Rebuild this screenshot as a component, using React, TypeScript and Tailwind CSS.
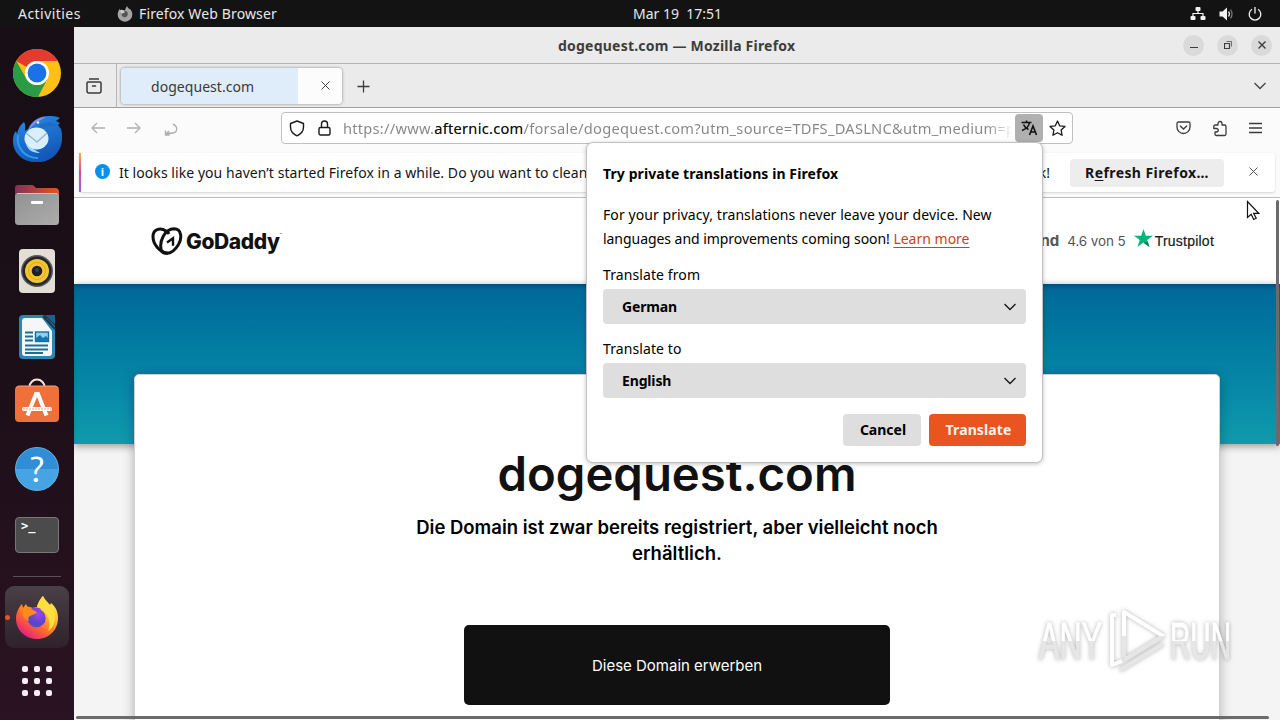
import type { ReactNode } from "react";

function ChromeIcon() {
  return (
    <svg width="48" height="48" viewBox="0 0 48 48">
      <circle cx="24" cy="24" r="24" fill="#fcc016" />
      <path d="M3.2 12A24 24 0 0 1 44.8 12H24A12 12 0 0 0 13.6 18Z" fill="#e33b2e" />
      <path d="M3.2 12A24 24 0 0 0 25 48L34.4 30A12 12 0 0 1 13.6 30Z" fill="#2a9b47" />
      <circle cx="24" cy="24" r="12" fill="#fff" />
      <circle cx="24" cy="24" r="9.4" fill="#1b72e8" />
    </svg>
  );
}

function ThunderbirdIcon() {
  return (
    <svg width="50" height="48" viewBox="0 0 50 48">
      <defs>
        <linearGradient id="tb" x1="0" y1="0" x2="0.4" y2="1">
          <stop offset="0" stopColor="#2a8de8" />
          <stop offset="1" stopColor="#1258b8" />
        </linearGradient>
      </defs>
      <path d="M16 14C20 5 28 1 36 1c4 0 8 0 12 2l-4 3 4 2-2 2 3 4c5 17-6 33-23 33C11 48 1 38 1 26c0-5 1-8 3-10l1 3c1-5 3-9 7-12 2 3 1 6 1 9z" fill="url(#tb)" />
      <path d="M17 14C20 6 27 2 34 2l-5 3c-5 2-9 6-12 10z" fill="#8e8de8" />
      <path d="M26 11c8-6 17-3 20 1-5-2-10-2-14 2z" fill="#2369c6" />
      <circle cx="26" cy="7.500" r="1.200" fill="#dff" />
      <path d="M6 20C4 33 13 43 26 43" fill="none" stroke="#2f9cf0" strokeWidth="2" />
      <ellipse cx="24.500" cy="23.500" rx="12" ry="11" fill="#d9f0fb" />
      <path d="M14 18l11 9 10-9" fill="none" stroke="#9db7cc" strokeWidth="1.500" />
      <path d="M14 29c4 4 8 5 14 9-6 0-12-2-14-9z" fill="#9edaf7" />
    </svg>
  );
}

function FilesIcon() {
  return (
    <svg width="46" height="42" viewBox="0 0 46 42">
      <defs>
        <linearGradient id="fl" x1="0" x2="1">
          <stop offset="0" stopColor="#803259" />
          <stop offset="1" stopColor="#e95420" />
        </linearGradient>
        <linearGradient id="flf" x1="0" y1="0" x2="1" y2="1">
          <stop offset="0" stopColor="#919191" />
          <stop offset="1" stopColor="#adadad" />
        </linearGradient>
      </defs>
      <path d="M1 4Q1 1 4 1h14q1 0 2 1l2 2h19q4 0 4 4v10H1z" fill="url(#fl)" />
      <rect x="1" y="9" width="44" height="32" rx="3.500" fill="url(#flf)" />
      <path d="M3 9.500h40" stroke="#c6c6c6" />
      <rect x="17" y="17" width="12" height="3" rx="1" fill="#fff" />
    </svg>
  );
}

function RhythmboxIcon() {
  return (
    <svg width="38" height="46" viewBox="0 0 38 46">
      <rect x="1" y="1" width="36" height="44" rx="4" fill="#e4dfd6" />
      <circle cx="19" cy="23" r="16" fill="#55585c" />
      <circle cx="19" cy="23" r="14.500" fill="#24262b" />
      <circle cx="19" cy="23" r="12" fill="#f4c532" />
      <circle cx="19" cy="23" r="8.500" fill="none" stroke="#e0a91f" strokeWidth="1" />
      <circle cx="19" cy="23" r="5.300" fill="#1c2026" />
      <circle cx="19" cy="22" r="2" fill="#3b4048" />
    </svg>
  );
}

function WriterIcon() {
  return (
    <svg width="38" height="46" viewBox="0 0 38 46">
      <path d="M1 5q0-4 4-4h21l11 11v29q0 4-4 4H5q-4 0-4-4z" fill="#2b86b3" />
      <path d="M27 1h10v10z" fill="#1b6288" />
      <path d="M4 7q0-3 3-3h17l10 13v22q0 3-3 3H7q-3 0-3-3z" fill="#f6f6f6" />
      <path d="M25 2l12 13" stroke="#17364d" strokeWidth="2" />
      <path d="M7 18.500h8M7 22.500h8M7 26.500h8M7 31.500h23M7 35.500h23M7 39h18" stroke="#1d6d99" strokeWidth="1.800" />
      <rect x="17.500" y="18" width="13" height="9.500" fill="#8ed1f0" stroke="#1d6d99" strokeWidth="1.400" />
      <path d="M18 27v-3l4-3 3 3 3-2 2 2v3z" fill="#1475b0" />
    </svg>
  );
}

function SoftwareIcon() {
  return (
    <svg className="mb-[5px]" width="46" height="46" viewBox="0 0 46 46">
      <path d="M15.500 11V9a7.500 7.500 0 0 1 15 0v2" fill="none" stroke="#f9e3da" strokeWidth="2" />
      <rect x="1" y="8" width="44" height="36" rx="4" fill="#f0703a" />
      <path d="M2 10q1-2 3-2h36q2 0 3 2" fill="none" stroke="#f5a07c" />
      <path d="M13.500 37.500L22 16h2l8.500 21.500" fill="none" stroke="#fff" strokeWidth="4" />
      <path d="M10 31h26" stroke="#fff" strokeWidth="4" strokeLinecap="round" />
      <path d="M9 31h28" stroke="#f0a078" strokeWidth="1" strokeDasharray="2 1" />
    </svg>
  );
}

function HelpIcon() {
  return (
    <div className="flex h-[44px] w-[44px] items-center justify-center rounded-full border border-[#62b3e6] bg-linear-to-b from-[#2f8ed6] from-50% to-[#46a3e4] to-50% font-['Ubuntu','Noto_Sans',sans-serif] text-[36px] leading-none text-white">
      ?
    </div>
  );
}

function TerminalIcon() {
  return (
    <div className="h-[36px] w-[44px] rounded-[4px] border border-[#777] bg-[#4b4b4b] pl-[5px] pt-[2px] font-['DejaVu_Sans_Mono',monospace] text-[12px] font-bold leading-[13px] text-white">
      &gt;_
    </div>
  );
}

function FirefoxIcon() {
  return (
    <svg width="44" height="46" viewBox="0 0 44 46">
      <defs>
        <linearGradient id="ff" x1="0.85" y1="0.1" x2="0.25" y2="0.95">
          <stop offset="0" stopColor="#fff14d" />
          <stop offset="0.35" stopColor="#ffb22e" />
          <stop offset="0.65" stopColor="#ff6a2a" />
          <stop offset="1" stopColor="#e8207e" />
        </linearGradient>
        <radialGradient id="ffc" cx="0.6" cy="0.3">
          <stop offset="0" stopColor="#a145e8" />
          <stop offset="1" stopColor="#5946c8" />
        </radialGradient>
      </defs>
      <path d="M22 13c2-4 3-8 6-11 2 4 5 6 7 9l1-2c5 4 7 9 7 15 0 12-9 21-21 21S1 36 1 24C1 19 4 13 7 10l1 4 3-4c1 3 3 4 6 4z" fill="url(#ff)" />
      <path d="M22 12c2-5 3-7 6-10 1 6 8 8 11 15 3 9-1 17-6 20 3-7 1-14-3-18-3-3-7-3-8-7z" fill="#ffdf3c" />
      <circle cx="21.500" cy="24" r="9.200" fill="url(#ffc)" />
      <path d="M8 14c4-2 10-2 14 5l-7 3c-2 1-2 3-1 5-6-2-8-7-6-13z" fill="#ff8a1d" />
      <path d="M16 15c3-2 8-2 11 1-3-1-4 0-5 2z" fill="#9040d8" />
    </svg>
  );
}

function DockItem({ children }: { children: ReactNode }) {
  return <div className="flex h-[66px] shrink-0 items-center justify-center">{children}</div>;
}

function Dock() {
  return (
    <aside className="flex w-[74px] shrink-0 flex-col bg-linear-to-b from-[#180e15] via-[#1c0f18] to-[#2b1322] pt-[13px]">
      <DockItem><ChromeIcon /></DockItem>
      <DockItem><ThunderbirdIcon /></DockItem>
      <DockItem><FilesIcon /></DockItem>
      <DockItem><RhythmboxIcon /></DockItem>
      <DockItem><WriterIcon /></DockItem>
      <DockItem><SoftwareIcon /></DockItem>
      <DockItem><HelpIcon /></DockItem>
      <DockItem><TerminalIcon /></DockItem>
      <div className="mx-[13px] mt-2 h-px shrink-0 bg-[#5b5058]" />
      <div className="mx-[5px] mt-[9px] flex h-[62px] shrink-0 items-center rounded-[9px] bg-linear-to-b from-[#4a4047] to-[#2f222b]">
        <span className="h-[5px] w-[5px] rounded-full bg-[#e95420]" />
        <span className="ml-[5px]"><FirefoxIcon /></span>
      </div>
      <div className="mx-auto mt-[18px] grid grid-cols-3 gap-[6px]">
        {[0, 1, 2, 3, 4, 5, 6, 7, 8].map((n) => (
          <span key={n} className="h-[6px] w-[6px] rounded-[2px] bg-[#f7eef5]" />
        ))}
      </div>
    </aside>
  );
}

function TopBar() {
  return (
    <header className="relative flex h-[27px] shrink-0 items-center bg-[#131313] text-[14px] text-[#e8e8e8]">
      <span className="ml-[18px] w-[99px] tracking-[0.45px]">Activities</span>
      <svg width="16" height="16" viewBox="0 0 44 46">
        <path d="M22 12c2-4 3-9 6-12 2 5 5 7 7 10v-3c5 4 8 10 8 17 0 12-9 21-21 21S1 36 1 24C1 18 4 12 7 8l1 5 3-4c1 3 3 4 6 4z" fill="#a4a4a4" />
        <circle cx="21" cy="23" r="9" fill="#555" />
        <path d="M8 13c4-2 10-2 14 5l-7 3c-2 1-2 3-1 5z" fill="#d0d0d0" />
      </svg>
      <span className="ml-[6px] w-[494px] tracking-[0.13px]">Firefox Web Browser</span>
      <span className="whitespace-pre">Mar 19  17:51</span>
      <div className="ml-auto mr-[18px] flex items-center gap-[13px]">
        <svg width="16" height="14" viewBox="0 0 16 14" fill="#f2f2f2">
          <rect x="5.500" y="0" width="5" height="4" rx="1" />
          <rect x="0.500" y="9" width="5" height="4" rx="1" />
          <rect x="10.500" y="9" width="5" height="4" rx="1" />
          <path d="M8 4v3M3 9V6.500h10V9" fill="none" stroke="#f2f2f2" strokeWidth="1.200" />
        </svg>
        <svg width="16" height="14" viewBox="0 0 16 14" fill="none">
          <path d="M0.500 4.500h3L8 0.500v13l-4.500-4h-3z" fill="#f2f2f2" />
          <path d="M9.500 4.500q2 2.500 0 5" stroke="#e0e0e0" strokeWidth="1.300" />
          <path d="M11.500 2.500q3 4.500 0 9" stroke="#777" strokeWidth="1.300" />
        </svg>
        <svg width="14" height="14" viewBox="0 0 14 14" fill="none" stroke="#f2f2f2" strokeWidth="1.300">
          <path d="M4 2.300a5.800 5.800 0 1 0 6 0M7 0v6.500" />
        </svg>
      </div>
    </header>
  );
}

function TitleBar() {
  return (
    <div className="flex h-[37px] items-center border-b border-[#b4b4b4] bg-[#ebebeb] text-[14px] font-bold text-[#3d3d3d]">
      <span className="ml-[484px] whitespace-nowrap tracking-[0.22px]">dogequest.com — Mozilla Firefox</span>
      <div className="ml-auto mr-[8px] flex gap-[13px]">
        <span className="flex h-[21px] w-[21px] items-center justify-center rounded-full bg-[#dadada]">
          <span className="mt-[5px] h-px w-2 bg-[#3d3d3d]" />
        </span>
        <span className="flex h-[21px] w-[21px] items-center justify-center rounded-full bg-[#dadada]">
          <svg width="8" height="8" viewBox="0 0 8 8" fill="none" stroke="#3d3d3d">
            <path d="M0.500 2.500h5v5h-5z" strokeWidth="1.200" />
            <path d="M2.500 0.500h5v5" strokeWidth="0.700" />
          </svg>
        </span>
        <span className="flex h-[21px] w-[21px] items-center justify-center rounded-full bg-[#dadada]">
          <svg width="8" height="8" viewBox="0 0 8 8" stroke="#3d3d3d" strokeWidth="1.400">
            <path d="M0.500 0.500l7 7M7.500 0.500l-7 7" />
          </svg>
        </span>
      </div>
    </div>
  );
}

function TabBar() {
  return (
    <div className="flex h-[44px] items-center border-b border-[#a0a0a0] bg-[#ebebeb] text-[#3a3a3a]">
      <div className="flex h-full w-[43px] items-center border-r border-[#b5b5b5] pl-[11px]">
        <svg width="18" height="18" viewBox="0 0 18 18" fill="none" stroke="#3b3b3b" strokeWidth="1.500">
          <path d="M4 2h10" />
          <path d="M3 5h12q1 0 1 1v8q0 2-2 2H4q-2 0-2-2V6q0-1 1-1zM7.500 9h3" strokeLinecap="round" />
        </svg>
      </div>
      <div className="ml-[4px] flex h-[36px] w-[221px] items-center rounded-[4px] bg-linear-to-r from-[#dfecfa] from-80% to-[#fcfcfc] to-80% pl-[30px] text-[14px] shadow-[0_0_3px_rgba(0,0,0,0.45)]">
        <span className="pt-[2px] tracking-[0.05px]">dogequest.com</span>
        <svg className="ml-auto mr-[12px]" width="9" height="9" viewBox="0 0 9 9" stroke="#444" strokeWidth="1">
          <path d="M0.500 0.500l8 8M8.500 0.500l-8 8" />
        </svg>
      </div>
      <svg className="ml-[15px] mt-px" width="13" height="13" viewBox="0 0 13 13" stroke="#3b3b3b" strokeWidth="1.300">
        <path d="M6.500 0.500v12M0.500 6.500h12" />
      </svg>
      <svg className="ml-auto mr-[14px]" width="12" height="8" viewBox="0 0 12 8" fill="none" stroke="#444" strokeWidth="1.300">
        <path d="M0.500 1l5.500 5.500L11.500 1" />
      </svg>
    </div>
  );
}

function NavBar() {
  return (
    <div className="flex h-[44px] items-center bg-[#fbfbfb] pb-[4px]">
      <svg className="ml-[17px]" width="14" height="12" viewBox="0 0 14 12" fill="none" stroke="#b0b0b0" strokeWidth="1.300">
        <path d="M14 6H1M6 1L1 6l5 5" />
      </svg>
      <svg className="ml-[22px]" width="14" height="12" viewBox="0 0 14 12" fill="none" stroke="#b0b0b0" strokeWidth="1.300">
        <path d="M0 6h13M8 1l5 5-5 5" />
      </svg>
      <svg className="ml-[23px] mt-[4px]" width="14" height="14" viewBox="0 0 14 14" fill="none" stroke="#b0b0b0" strokeWidth="1.400">
        <path d="M9 1C13 3 13.500 6 12 8.500 10.500 10.500 7 10.500 2 10.500M1.500 7.500v4.500h4M2 11l3-3" />
      </svg>
      <div className="ml-[103px] flex h-[32px] w-[792px] items-center rounded-[4px] border border-[#c0c0c0] bg-white">
        <svg className="ml-[7px]" width="16" height="17" viewBox="0 0 16 17" fill="none" stroke="#1a1a1a" strokeWidth="1.400" strokeLinejoin="round">
          <path d="M8 1l6.500 2.500V7c0 4-2.500 7-6.500 8.800C4 14 1.500 11 1.500 7V3.500z" />
        </svg>
        <svg className="ml-[13px]" width="13" height="16" viewBox="0 0 13 16" fill="none" stroke="#1a1a1a" strokeWidth="1.400">
          <rect x="1" y="7.500" width="11" height="7.500" rx="1.500" />
          <path d="M3.500 7.500V4a3 3 0 0 1 6 0v3.500" />
        </svg>
        <div className="ml-[12px] w-[670px] shrink-0 overflow-hidden whitespace-nowrap bg-linear-to-r from-[#858585] from-96% to-white bg-clip-text text-[14.67px] leading-[22px] tracking-[0.24px] text-transparent">
          https://www.<span className="text-[#111]">afternic.com</span>/forsale/dogequest.com?utm_source=TDFS_DASLNC&amp;utm_medium=p
        </div>
        <div className="ml-[2px] flex h-[28px] w-[28px] shrink-0 items-center justify-center rounded-[4px] bg-[#b0b0b0]">
          <svg width="17" height="16" viewBox="0 0 17 16" fill="none" stroke="#111" strokeWidth="1.600">
            <path d="M0.500 2.500h10M5.500 0.500v2M8.500 2.500C8 6 5 9 1 10.500M2.500 4.500c1 2.500 3 4 5 5" />
            <path d="M8.500 15l3.500-9 3.500 9M9.500 12h5" />
          </svg>
        </div>
        <svg className="ml-[6px] shrink-0" width="17" height="17" viewBox="0 0 17 17" fill="none" stroke="#1a1a1a" strokeWidth="1.300" strokeLinejoin="round">
          <path d="M8.500 1l2.200 4.800 5.300.6-3.900 3.600 1 5.300-4.600-2.600-4.600 2.600 1-5.300L1 6.400l5.300-.6z" />
        </svg>
      </div>
      <div className="ml-auto mr-[18px] flex items-center">
        <svg width="15" height="14" viewBox="0 0 15 14" fill="none" stroke="#3b3b3b" strokeWidth="1.300">
          <path d="M2.500 1h10q1.500 0 1.500 1.500V6a6.500 6.500 0 0 1-13 0V2.500Q1 1 2.500 1z" />
          <path d="M4.300 5l3.200 3 3.200-3" strokeLinecap="round" />
        </svg>
        <svg className="ml-[21px]" width="16" height="17" viewBox="0 0 16 17" fill="none" stroke="#3b3b3b" strokeWidth="1.300" strokeLinejoin="round">
          <path d="M6 5V3.500a2 2 0 0 1 4 0V5h2.500q1.500 0 1.500 1.500V14q0 1.500-1.500 1.500h-8Q3 15.500 3 14v-2h1.500a1.700 1.700 0 0 0 0-3.500H1.800V6.500Q1.800 5 3.300 5z" />
        </svg>
        <svg className="ml-[21px]" width="13" height="12" viewBox="0 0 13 12" stroke="#3b3b3b" strokeWidth="1.300">
          <path d="M0 1.500h13M0 6h13M0 10.500h13" />
        </svg>
      </div>
    </div>
  );
}

function NotificationBar() {
  return (
    <div className="h-[46px] border-b border-[#bdbdbd] bg-[#fafafa] pl-[5px] pr-[5px] pt-px">
      <div className="flex h-[39px] items-center rounded-[3px] bg-white text-[14px] text-[#15141a] shadow-[0_1px_2px_rgba(0,0,0,0.15)]">
        <span className="h-full w-[2px] shrink-0 bg-linear-to-b from-[#ffa436] via-[#e0418f] to-[#9059ff]" />
        <span className="mb-[3px] ml-[14px] flex h-[15px] w-[15px] shrink-0 items-center justify-center rounded-full bg-[#0090ed] text-[11px] font-bold leading-none text-white">
          i
        </span>
        <span className="ml-[9px] flex w-[931px] shrink-0 justify-between whitespace-nowrap tracking-[0.06px]">
          <span>It looks like you haven’t started Firefox in a while. Do you want to clean</span>
          <span>k!</span>
        </span>
        <button className="ml-[20px] h-[28px] w-[154px] shrink-0 rounded-[4px] bg-[#ededed] font-bold tracking-[0.42px]">
          R<span className="underline underline-offset-2">e</span>fresh Firefox…
        </button>
        <svg className="mb-[3px] ml-[25px] shrink-0" width="9" height="9" viewBox="0 0 9 9" stroke="#555" strokeWidth="1">
          <path d="M0.500 0.500l8 8M8.500 0.500l-8 8" />
        </svg>
      </div>
    </div>
  );
}

function GoDaddyLogo() {
  return (
    <div className="flex items-center text-[#111]">
      <svg width="32" height="28" viewBox="0 0 32 28" fill="none" stroke="#111" strokeWidth="3">
        <path d="M17 26.300C8 25 2 17 2 9.500 2 2.500 9 0 15 4c1.500 1 2.500 2 3 3" />
        <path d="M10.500 24C7.500 14 14 2 23 1.800c8 0 8 10 4.500 15.700-3 5-7 8.800-11.500 8.800-2.500 0-4.500-1-5.500-2.300z" />
        <path d="M16 15.500l6-4.200v7.500" strokeWidth="2.400" />
      </svg>
      <span className="ml-[3px] mt-[2px] font-['Inter',sans-serif] text-[21px] font-extrabold tracking-[-0.4px]">GoDaddy</span>
      <span className="mb-[12px] text-[4px]">™</span>
    </div>
  );
}

function LandingPage() {
  return (
    <main className="relative flex h-[522px] flex-col overflow-hidden bg-[#f4f4f4] font-['Inter',sans-serif]">
      <div className="flex h-[86px] shrink-0 items-center bg-white pl-[77px] pr-[66px]">
        <GoDaddyLogo />
        <div className="ml-auto flex items-center text-[#555]">
          <span className="text-[15px] font-bold">Hervorragend</span>
          <span className="ml-[8px] text-[13.500px] tracking-[-0.1px]">4.6 von 5</span>
          <svg className="mb-[6px] ml-[8px]" width="19" height="18" viewBox="0 0 19 18">
            <path d="M9.500 0l2.300 6.700H19l-5.800 4.200L15.500 18l-6-4.400L3.500 18l2.200-7.100L0 6.700h7.200z" fill="#00b67a" />
            <path d="M13.500 12.500l-4 1.200 6 4.300z" fill="#0a7f56" />
          </svg>
          <span className="ml-[2px] font-['Liberation_Sans',Arial,sans-serif] text-[14px] tracking-[0.22px] text-[#191919] [-webkit-text-stroke:0.2px_#191919]">
            Trustpilot
          </span>
        </div>
      </div>
      <div className="h-[160px] shrink-0 bg-linear-to-b from-[#00689a] to-[#109aad] shadow-[0_2px_8px_rgba(0,0,0,0.4),inset_0_4px_5px_-2px_rgba(0,0,0,0.3)]" />
      <section className="relative mx-[60px] -mt-[70px] flex h-[400px] shrink-0 flex-col items-center rounded-[5px] border border-[#d0d0d0] bg-white shadow-[0_2px_12px_rgba(0,0,0,0.28)]">
        <h1 className="mt-[68px] text-[47.300px] font-semibold leading-[62px] text-[#111]">dogequest.com</h1>
        <p className="mt-[9px] w-[580px] text-center text-[18.500px] font-semibold leading-[26px] text-black">
          Die Domain ist zwar bereits registriert, aber vielleicht noch
          <br />
          erhältlich.
        </p>
        <button className="mt-[59px] h-[80px] w-[426px] shrink-0 rounded-[5px] bg-[#111] pt-[2px] text-[15px] text-white">
          Diese Domain erwerben
        </button>
      </section>
      <div className="absolute right-px top-[2px] h-[246px] w-[3px] rounded-full bg-[#6b6b6b]" />
      <div className="absolute bottom-px left-[2px] h-[3px] w-[1193px] rounded-full bg-[#6b6b6b]" />
    </main>
  );
}

function LanguageSelect({ label, value }: { label: string; value: string }) {
  return (
    <label className="block">
      <span className="block leading-[20px] tracking-[0.1px]">{label}</span>
      <span className="mt-[4px] flex h-[35px] items-center rounded-[4px] bg-[#dedede] pl-[19px] pr-[10px] font-bold">
        <span className="tracking-[-0.15px]">{value}</span>
        <svg className="ml-auto" width="12" height="8" viewBox="0 0 12 8" fill="none" stroke="#15141a" strokeWidth="1.300">
          <path d="M0.500 1l5.500 5.500L11.500 1" />
        </svg>
      </span>
    </label>
  );
}

function TranslatePanel() {
  return (
    <div className="absolute left-[586px] top-[142px] h-[321px] w-[457px] rounded-[7px] border border-[#c2c2c2] bg-white px-[16px] text-[14px] text-black shadow-[0_1px_4px_rgba(0,0,0,0.25)]">
      <h2 className="mt-[21px] font-bold leading-[20px] tracking-[0.09px]">Try private translations in Firefox</h2>
      <p className="mt-[19px] whitespace-nowrap leading-[24px]">
        <span className="tracking-[0.07px]">For your privacy, translations never leave your device. New</span>
        <br />
        <span className="tracking-[-0.05px]">languages and improvements coming soon! </span>
        <a className="text-[#c5441f] underline underline-offset-[3px]">Learn more</a>
      </p>
      <div className="mt-[14px]"><LanguageSelect label="Translate from" value="German" /></div>
      <div className="mt-[15px]"><LanguageSelect label="Translate to" value="English" /></div>
      <div className="mt-[16px] flex justify-end gap-[8px] font-bold">
        <button className="h-[32px] w-[78px] rounded-[4px] bg-[#dedede] pb-[2px] pl-[2px]">Cancel</button>
        <button className="h-[32px] w-[97px] rounded-[4px] bg-[#e95420] pb-[2px] pl-[2px] tracking-[0.1px] text-[#fff3ee]">Translate</button>
      </div>
    </div>
  );
}

function Watermark() {
  return (
    <svg className="absolute left-[1030px] top-[600px] drop-shadow-[0_0_2px_rgba(0,0,0,0.3)]" width="212" height="80" viewBox="0 0 212 80">
      <defs>
        <linearGradient id="wm" x1="0" y1="0" x2="0" y2="1">
          <stop offset="0.5" stopColor="#fff" />
          <stop offset="0.5" stopColor="#e6e6e6" />
        </linearGradient>
      </defs>
      <g fill="url(#wm)" stroke="url(#wm)" strokeWidth="1" fontFamily="Liberation Sans Narrow, Liberation Sans, sans-serif" fontSize="52">
        <text x="9" y="59" textLength="63" lengthAdjust="spacingAndGlyphs">ANY</text>
        <text x="140" y="59" textLength="61" lengthAdjust="spacingAndGlyphs">RUN</text>
      </g>
      <g fill="none" stroke="#fff" strokeWidth="4" strokeLinejoin="round">
        <path d="M94 57V12l39 24-39 24" stroke="url(#wm)" />
        <path d="M86 15h-4v50l10-4" />
        <path d="M90 70l43-26" stroke="#e6e6e6" />
      </g>
    </svg>
  );
}

export default function App() {
  return (
    <div className="relative flex h-[720px] w-[1280px] flex-col overflow-hidden font-['Noto_Sans',sans-serif]">
      <TopBar />
      <div className="flex min-h-0 flex-1">
        <Dock />
        <div className="min-w-0 flex-1">
          <TitleBar />
          <TabBar />
          <NavBar />
          <NotificationBar />
          <LandingPage />
        </div>
      </div>
      <TranslatePanel />
      <Watermark />
      <svg className="absolute left-[1246px] top-[200px]" width="14" height="21" viewBox="0 0 14 21" fill="#fff" stroke="#111" strokeWidth="1.200">
        <path d="M1.500 1.500v16l3.700-3.300 2.500 5.300 2.500-1.200-2.500-5h5z" />
      </svg>
    </div>
  );
}
